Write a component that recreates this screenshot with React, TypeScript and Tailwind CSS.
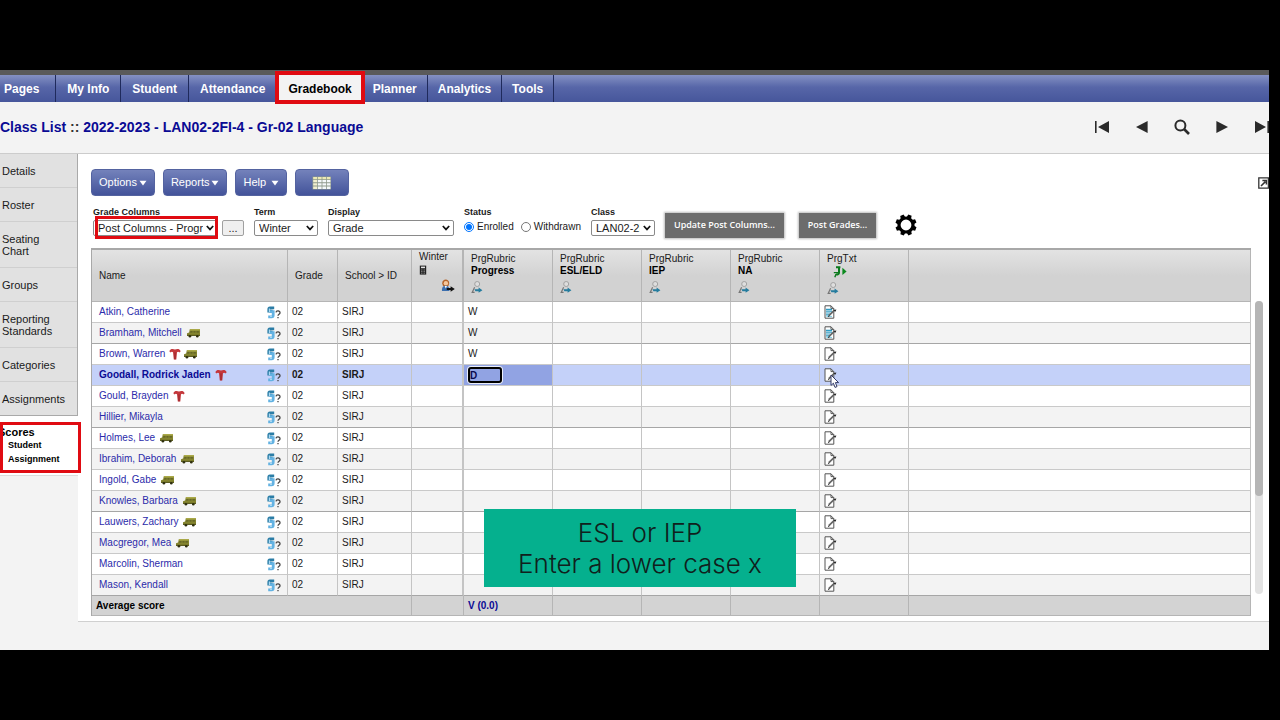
import clsx from "clsx";
import type { ReactNode } from "react";

type Mark = "alert" | "bus";

type Student = {
  name: string;
  marks?: Mark[];
  progress?: string;
  hasText?: boolean;
};

const tabs = ["Pages", "My Info", "Student", "Attendance", "Gradebook", "Planner", "Analytics", "Tools"];
const currentTab = tabs.indexOf("Gradebook");

const sideLinks = ["Details", "Roster", "Seating Chart", "Groups", "Reporting Standards", "Categories", "Assignments"];

const students: Student[] = [
  { name: "Atkin, Catherine", progress: "W", hasText: true },
  { name: "Bramham, Mitchell", marks: ["bus"], progress: "W", hasText: true },
  { name: "Brown, Warren", marks: ["alert", "bus"], progress: "W" },
  { name: "Goodall, Rodrick Jaden", marks: ["alert"], progress: "D" },
  { name: "Gould, Brayden", marks: ["alert"] },
  { name: "Hillier, Mikayla" },
  { name: "Holmes, Lee", marks: ["bus"] },
  { name: "Ibrahim, Deborah", marks: ["bus"] },
  { name: "Ingold, Gabe", marks: ["bus"] },
  { name: "Knowles, Barbara", marks: ["bus"] },
  { name: "Lauwers, Zachary", marks: ["bus"] },
  { name: "Macgregor, Mea", marks: ["bus"] },
  { name: "Marcolin, Sherman" },
  { name: "Mason, Kendall" },
];

const rubrics = ["Progress", "ESL/ELD", "IEP", "NA"];

const activeRow = 3;

function AlertIcon() {
  return (
    <svg className="h-3 w-3" viewBox="0 0 12 12">
      <path d="M0.3 3.2C1.4 0.2 4.2 0.8 6 1.4C7.8 0.8 10.6 0.2 11.7 3.2L10.4 4.4C9.6 3.4 8.6 3.6 8 4.2L7.3 11.6H4.8L4 4.2C3.4 3.6 2.4 3.4 1.6 4.4Z" fill="#c4383c" />
      <path d="M6 4.4V11.4" stroke="#8f2428" strokeWidth="0.9" />
    </svg>
  );
}

function BusIcon() {
  return (
    <svg className="h-2.5 w-[15px]" viewBox="0 0 14 10">
      <path d="M3.4 1H13.5V8H0.5V5.2L2.6 4.4Z" fill="#84842f" />
      <path d="M3.6 1H13.5V2.4H3.3Z" fill="#aaa94a" />
      <path d="M4 3.2H6V4.6H3.4ZM7 3.2H9V4.6H7ZM10 3.2H12.4V4.6H10Z" fill="#5d5f24" />
      <path d="M0.5 6.8H13.5V8H0.5Z" fill="#5b5c20" />
      <circle cx="3.4" cy="8.2" r="1.3" fill="#2f3010" />
      <circle cx="10.8" cy="8.2" r="1.3" fill="#2f3010" />
    </svg>
  );
}

function SupportIcon() {
  return (
    <svg className="h-[13px] w-3.5" viewBox="0 0 14 13" fill="none">
      <path d="M7.2 1.8H3C2 1.8 1.8 2.4 1.8 3.4V5.2H5.6" stroke="#2b7da6" strokeWidth="2.8" />
      <path d="M2.6 5.6H6.2V9.2C6.2 10.2 5.6 10.8 4.6 10.8H1.2" stroke="#63b2e2" strokeWidth="2.8" />
      <path d="M2.4 2.6V6M3 10.4H5" stroke="#a9d8f2" strokeWidth="1.2" />
      <path d="M9 6.4C9.2 4.4 13.2 4.4 13 6.8C12.8 8.2 11 8.2 11 9.8M11 10.9V12.3" stroke="#444" strokeWidth="1.3" />
    </svg>
  );
}

function NoteIcon({ filled }: { filled?: boolean }) {
  return (
    <svg className="h-3.5 w-[13px]" viewBox="0 0 13 14" fill="none">
      <path d="M1 0.8H7L9.8 3.6V13.2H1Z" fill="#fff" stroke="#555" />
      <path d="M7 0.8V3.6H9.8" stroke="#555" />
      {filled && (
        <>
          <path d="M2 4.4H8M2 6.2H8M2 8H6.4M2 9.8H5.6" stroke="#2f9cc4" strokeWidth="1.2" />
          <path d="M2.4 11.4H8" stroke="#7ccbe2" />
        </>
      )}
      <path d="M4.8 10.6L10.6 5.2" stroke="#666" strokeWidth="1.8" />
      <path d="M9.4 5L12.4 4.4L11.4 6.8Z" fill="#222" />
      <path d="M4 11.4L5.4 11" stroke="#222" />
    </svg>
  );
}

function FillIcon() {
  return (
    <svg className="h-3 w-3" viewBox="0 0 12 12" fill="none">
      <circle cx="6.2" cy="3" r="2.5" fill="#dedede" stroke="#a2a2a2" />
      <path d="M3.6 6.2L1.2 11.4H3.6" stroke="#777" strokeWidth="1.2" />
      <path d="M3.4 8.2H7.6V6.6L11.4 9.2L7.6 11.8V10.2H4.4Z" fill="#257c9e" />
    </svg>
  );
}

function PersonIcon() {
  return (
    <svg className="h-[13px] w-3.5" viewBox="0 0 14 13">
      <path d="M1.2 4.4C1 -0.6 8.4 -0.8 8.2 4.4L7.4 7H2Z" fill="#b5642a" />
      <circle cx="4.9" cy="4.2" r="2.2" fill="#f6c79b" />
      <path d="M1 12C0.6 8 2.6 6.8 4.8 6.8C7 6.8 8.4 8 8.4 12Z" fill="#3c6fae" />
      <path d="M3.6 7L4.8 9.4L6 7Z" fill="#fff" />
      <path d="M5.8 9H9.6V7.2L13.8 10L9.6 12.8V11H5.8Z" fill="#111" />
    </svg>
  );
}

function CalcIcon() {
  return (
    <svg className="h-2.5 w-2" viewBox="0 0 8 10">
      <path d="M0.8 0.6H7.2V9.6H0.8Z" fill="#222" />
      <path d="M2 1.6H6V3.2H2Z" fill="#e4e4e4" />
      <path d="M2 5H6M2 6.6H6M2 8.2H6" stroke="#999" strokeWidth="0.8" strokeDasharray="1 0.5" />
    </svg>
  );
}

function PinIcon() {
  return (
    <svg className="h-3 w-3.5" viewBox="0 0 14 12" fill="none">
      <path d="M3 1.2H7.4M6 1V6.6C6 8.4 4.2 8.8 2.8 8" stroke="#0b7a1c" strokeWidth="2" />
      <path d="M0.8 6.6H7M3 8.4L1.8 11.2" stroke="#0b7a1c" strokeWidth="1.4" />
      <path d="M9.4 1.8L13.6 5.4L9.4 9Z" fill="#0b8a1e" />
    </svg>
  );
}

function GearIcon() {
  return (
    <svg className="size-[22px]" viewBox="0 0 22 22">
      <circle cx="11" cy="11" r="7" fill="none" stroke="#000" strokeWidth="3.2" />
      <g fill="#000">
        {[22, 67, 112, 157, 202, 247, 292, 337].map((angle) => (
          <path key={angle} d="M8.6 3.6L9.2 0.4H12.8L13.4 3.6Z" transform={`rotate(${angle} 11 11)`} />
        ))}
      </g>
    </svg>
  );
}

function GridIcon() {
  return (
    <svg className="h-3.5 w-5" viewBox="0 0 20 14">
      <path d="M0.5 0.5H19V13.5H0.5Z" fill="#8f9a8c" />
      <path d="M1.2 1H5V3.2H1.2ZM5.8 1H9.6V3.2H5.8ZM10.4 1H14V3.2H10.4ZM14.8 1H18.4V3.2H14.8Z" fill="#ece9b4" />
      <path d="M1.2 4H5V6.2H1.2ZM1.2 7.2H5V9.6H1.2ZM1.2 10.6H5V13H1.2Z" fill="#f2efcf" />
      <path d="M5.8 4H9.6V6.2H5.8ZM10.4 4H14V6.2H10.4ZM14.8 4H18.4V6.2H14.8ZM5.8 7.2H9.6V9.6H5.8ZM10.4 7.2H14V9.6H10.4ZM14.8 7.2H18.4V9.6H14.8ZM5.8 10.6H9.6V13H5.8ZM10.4 10.6H14V13H10.4ZM14.8 10.6H18.4V13H14.8Z" fill="#f4f8fa" />
    </svg>
  );
}

function MenuButton({ children }: { children: ReactNode }) {
  return (
    <button className="flex h-[27px] min-w-[52px] items-center justify-between gap-0.5 rounded-[4px] border border-[#5463a0] bg-linear-to-b from-[#7482bb] to-[#43539a] px-[7px] text-[11px] text-white">
      {children}
      <svg className="h-1.5 w-2" viewBox="0 0 8 6">
        <path d="M0.5 0.8H7.5L4 5.4Z" fill="#fff" />
      </svg>
    </button>
  );
}

function PickList({ id, label, value, className }: { id: string; label: string; value: string; className: string }) {
  return (
    <div className="flex flex-col gap-[3px]">
      <label htmlFor={id} className="text-[9px] leading-[10px] font-bold">
        {label}
      </label>
      <div className={clsx("relative", className)}>
        <select
          id={id}
          className="block h-4 w-full appearance-none rounded-[2px] border border-[#8a8a8a] bg-white pr-3.5 pl-1 text-[11px] leading-[14px]"
        >
          <option>{value}</option>
        </select>
        <svg className="pointer-events-none absolute top-[5px] right-1 h-1.5 w-2" viewBox="0 0 8 6" fill="none">
          <path d="M0.8 1L4 4.4L7.2 1" stroke="#111" strokeWidth="1.7" />
        </svg>
      </div>
    </div>
  );
}

function NavArrow({ label, children }: { label: string; children: ReactNode }) {
  return (
    <button aria-label={label} className="flex w-10 justify-center">
      <svg className="size-4" viewBox="0 0 16 16" fill="#2a2a2a">
        {children}
      </svg>
    </button>
  );
}

function TopTabs() {
  return (
    <nav className="border-t-[5px] border-[#5a5a5a]">
      <ul className="flex h-[27px] bg-linear-to-b from-[#8591c3] via-[#5766a8] via-45% to-[#46569b] text-[12px] font-bold text-white">
        {tabs.map((tab, i) => (
          <li key={tab} className="relative flex">
            <a
              href="#"
              className={clsx(
                "flex items-center",
                i === 0 ? "pr-4 pl-1" : i > currentTab ? "px-2.5" : "px-[11px]",
                i === currentTab ? "bg-[#f3f3f3] text-black" : "border-r border-[#1f2a5c]",
              )}
            >
              {tab}
            </a>
            {i === currentTab && (
              <span className="pointer-events-none absolute -inset-x-0.5 -top-1 -bottom-0.5 border-4 border-[#e00b12]" />
            )}
          </li>
        ))}
      </ul>
    </nav>
  );
}

function Sidebar() {
  return (
    <aside className="w-[78px] shrink-0 bg-[#f3f3f3]">
      <ul className="border-r border-b border-[#a9a9a9] bg-[#e1e1e1] text-[11px] leading-3">
        {sideLinks.map((link) => (
          <li key={link} className="border-b border-[#cfcfcf] pt-[11px] pr-5 pb-2.5 pl-0.5 last:border-b-0">
            <a href="#">{link}</a>
          </li>
        ))}
      </ul>
      <div className="relative border-b border-[#dcdcdc] bg-white pt-2.5 pb-[9px] font-bold text-black">
        <a href="#" className="-ml-0.5 block text-[11px] leading-3">
          Scores
        </a>
        <a href="#" className="block pl-2 text-[9px] leading-[14px]">
          Student
        </a>
        <a href="#" className="block pl-2 text-[9px] leading-[14px]">
          Assignment
        </a>
        <span className="pointer-events-none absolute top-1.5 -right-[3px] bottom-0.5 left-0 border-[3px] border-[#e00b12]" />
      </div>
    </aside>
  );
}

function Filters() {
  return (
    <form className="flex h-[42px] gap-2.5 pt-2 pl-0.5" onSubmit={(e) => e.preventDefault()}>
      <div className="relative flex items-end gap-1 self-start">
        <PickList id="columns" label="Grade Columns" value="Post Columns - Progress" className="w-[125px]" />
        <button className="flex h-4 w-[22px] items-center justify-center rounded-[2px] border border-[#a0a0a0] bg-[#efefef] text-[11px]">
          ...
        </button>
        <span className="pointer-events-none absolute -bottom-[3px] left-0.5 h-[23px] w-[123px] border-[3px] border-[#e00b12]" />
      </div>
      <PickList id="term" label="Term" value="Winter" className="w-16" />
      <PickList id="display" label="Display" value="Grade" className="w-[126px]" />
      <fieldset className="flex w-[117px] flex-col">
        <legend className="mb-[3px] text-[9px] leading-[10px] font-bold">Status</legend>
        <div className="flex items-center gap-[3px] text-[10px] leading-[14px]">
          <input type="radio" id="enrolled" name="status" defaultChecked className="size-2.5" />
          <label htmlFor="enrolled">Enrolled</label>
          <input type="radio" id="withdrawn" name="status" className="ml-1 size-2.5" />
          <label htmlFor="withdrawn">Withdrawn</label>
        </div>
      </fieldset>
      <PickList id="class" label="Class" value="LAN02-2FI-4" className="w-16" />
      <div className="flex h-7 items-center gap-[15px] pt-2 font-['Open_Sans',sans-serif] text-[9px] font-semibold text-white">
        <button className="h-[25px] w-[119px] bg-[#6c6c6c] shadow-[0_0_2px_1px_#bbb]">Update Post Columns...</button>
        <button className="h-[25px] w-[77px] bg-[#6c6c6c] shadow-[0_0_2px_1px_#bbb]">Post Grades...</button>
        <button aria-label="Settings" className="ml-1">
          <GearIcon />
        </button>
      </div>
    </form>
  );
}

function HeadCell({ children, className }: { children?: ReactNode; className?: string }) {
  return (
    <th className={clsx("border-r border-b border-[#b5b5b5] px-[7px] text-left font-normal", className)}>
      {children}
    </th>
  );
}

function ScoreTable() {
  return (
    <table className="w-full table-fixed border-separate border-spacing-0 border-t-2 border-l border-[#a8a8a8] text-[10px] leading-3">
      <colgroup>
        <col className="w-[196px]" />
        <col className="w-[50px]" />
        <col className="w-[74px]" />
        <col className="w-[52px]" />
        <col className="w-[89px]" />
        <col className="w-[89px]" />
        <col className="w-[89px]" />
        <col className="w-[89px]" />
        <col className="w-[89px]" />
        <col />
      </colgroup>
      <thead>
        <tr className="h-[52px] bg-linear-to-b from-[#e3e3e3] to-[#d2d2d2] to-50%">
          <HeadCell>Name</HeadCell>
          <HeadCell>Grade</HeadCell>
          <HeadCell>School &gt; ID</HeadCell>
          <HeadCell className="border-r-2 align-top">
            <div className="pt-px pb-0.5">Winter</div>
            <CalcIcon />
            <div className="flex justify-end pt-1">
              <PersonIcon />
            </div>
          </HeadCell>
          {rubrics.map((rubric) => (
            <HeadCell key={rubric} className="align-top">
              <div className="pt-[3px]">PrgRubric</div>
              <div className="mb-1 font-bold text-black">{rubric}</div>
              <FillIcon />
            </HeadCell>
          ))}
          <HeadCell className="align-top">
            <div className="pt-[3px]">PrgTxt</div>
            <div className="mb-1 pt-px pl-1.5">
              <PinIcon />
            </div>
            <FillIcon />
          </HeadCell>
          <HeadCell />
        </tr>
      </thead>
      <tbody>
        {students.map((student, i) => {
          const active = i === activeRow;
          const cell = clsx("border-r border-b border-r-[#c4c4c4] px-1", i % 4 === 1 ? "border-b-[#a6a6a6]" : "border-b-[#c9c9c9]");
          return (
            <tr
              key={student.name}
              className={clsx("h-[21px]", active ? "bg-[#c4d1f9] font-bold" : i % 2 ? "bg-[#f3f3f3]" : "bg-white")}
            >
              <td className={clsx(cell, "pl-[7px]")}>
                <div className="flex items-center gap-1">
                  <a href="#" className={active ? "text-[#0a0a94]" : "text-[#2b2baa]"}>
                    {student.name}
                  </a>
                  <span className="flex items-center gap-0.5">
                    {student.marks?.map((mark) => (mark === "alert" ? <AlertIcon key={mark} /> : <BusIcon key={mark} />))}
                  </span>
                  <span className="ml-auto pr-0.5">
                    <SupportIcon />
                  </span>
                </div>
              </td>
              <td className={cell}>02</td>
              <td className={cell}>SIRJ</td>
              <td className={clsx(cell, "border-r-2 border-r-[#b0b0b0]")} />
              <td className={clsx(cell, active && "bg-[#91a3e3]")}>
                {active ? (
                  <input
                    aria-label="Progress grade"
                    defaultValue={student.progress}
                    className="block h-4 w-[34px] rounded-[3px] border-2 border-black bg-[#91a3e3] font-bold text-[#0a0a50] ring-1 ring-white/80"
                  />
                ) : (
                  student.progress
                )}
              </td>
              <td className={cell} />
              <td className={cell} />
              <td className={cell} />
              <td className={cell}>
                <button aria-label="Edit comment" className="relative block">
                  <NoteIcon filled={student.hasText} />
                  {active && (
                    <svg className="absolute top-1.5 left-1.5 z-10 h-[15px] w-2.5" viewBox="0 0 10 15">
                      <path d="M1 1V11.4L3.4 9.2L5 13.4L7 12.6L5.4 8.6H8.6Z" fill="#fff" stroke="#333a66" />
                    </svg>
                  )}
                </button>
              </td>
              <td className={cell} />
            </tr>
          );
        })}
      </tbody>
      <tfoot>
        <tr className="h-5 bg-[#d3d3d3] font-bold [&>td]:border-r [&>td]:border-b [&>td]:border-[#b5b5b5] [&>td]:px-1">
          <td colSpan={3} className="text-black">
            Average score
          </td>
          <td />
          <td className="text-[#0a0a94]">V (0.0)</td>
          <td />
          <td />
          <td />
          <td />
          <td />
        </tr>
      </tfoot>
    </table>
  );
}

export default function App() {
  return (
    <div className="min-h-screen bg-black py-[70px] pr-[11px] font-['Liberation_Sans',Arial,sans-serif] text-[#1a1a1a]">
      <div className="overflow-hidden bg-[#f3f3f3] pb-7">
        <TopTabs />
        <header className="flex h-[52px] items-center justify-between border-b border-[#cccccc]">
          <h1 className="text-[14px] font-bold text-[#0a0a94]">
            Class List <span className="text-[#333]">::</span> 2022-2023 - LAN02-2FI-4 - Gr-02 Language
          </h1>
          <div className="-mr-[13px] flex pb-0.5">
            <NavArrow label="First">
              <path d="M1 2H2.6V14H1ZM15 2V14L4 8Z" />
            </NavArrow>
            <NavArrow label="Previous">
              <path d="M13.6 2V14L2 8Z" />
            </NavArrow>
            <NavArrow label="Search">
              <circle cx="6.4" cy="6.4" r="5" fill="none" stroke="#2a2a2a" strokeWidth="2" />
              <path d="M10 10L15 15" stroke="#2a2a2a" strokeWidth="2.6" />
            </NavArrow>
            <NavArrow label="Next">
              <path d="M2.4 2V14L14 8Z" />
            </NavArrow>
            <NavArrow label="Last">
              <path d="M1 2V14L12 8ZM13.4 2H15V14H13.4Z" />
            </NavArrow>
          </div>
        </header>
        <div className="flex">
          <Sidebar />
          <main className="min-w-0 flex-1 border-b border-[#d0d0d0] bg-white pb-[5px] pl-[13px]">
            <div className="flex items-center gap-2 pt-[15px]">
              <MenuButton>Options</MenuButton>
              <MenuButton>Reports</MenuButton>
              <MenuButton>Help</MenuButton>
              <button
                aria-label="Grid view"
                className="flex h-[27px] w-[54px] items-center justify-center rounded-[4px] border border-[#5463a0] bg-linear-to-b from-[#7482bb] to-[#43539a]"
              >
                <GridIcon />
              </button>
              <button aria-label="Open in new window" className="ml-auto">
                <svg className="h-3 w-[11px]" viewBox="0 0 11 12" fill="none">
                  <path d="M11 0.8H0.8V11.2H11M10.4 0.8V11.2" stroke="#333" strokeWidth="1.3" />
                  <path d="M3 9L7.4 4.6M4.4 3.4H8.4V7.4" stroke="#333" strokeWidth="1.5" />
                </svg>
              </button>
            </div>
            <div className="pt-[3px]">
              <Filters />
            </div>
            <div className="relative mt-[7px] flex gap-1 pr-1.5">
              <ScoreTable />
              <div className="mt-[53px] mb-[22px] w-2 shrink-0 rounded-full bg-[#e3e3e3]">
                <div className="h-2/3 rounded-full bg-[#b5b5b5]" />
              </div>
              <div className="absolute bottom-[29px] left-[393px] z-20 flex h-[78px] w-[312px] flex-col justify-center bg-[#05b08e] text-center font-[Inter,sans-serif] text-[26px] leading-[31px] font-light text-[#10201c]">
                <p>ESL or IEP</p>
                <p>Enter a lower case x</p>
              </div>
            </div>
          </main>
        </div>
      </div>
    </div>
  );
}
